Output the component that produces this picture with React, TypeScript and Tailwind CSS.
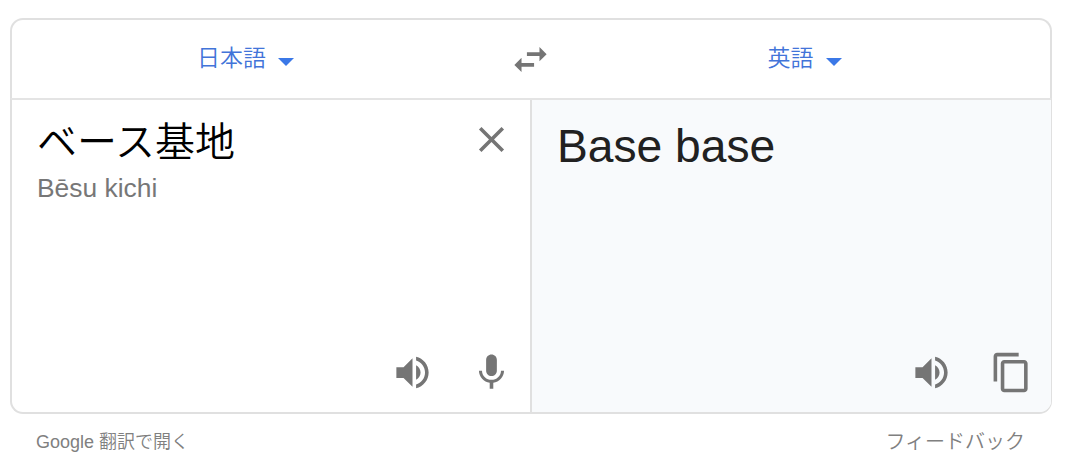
import type { ReactNode } from 'react'

const ICONS = {
  swap: 'M6.99 11L3 15l3.99 4v-3H14v-2H6.99v-3zM21 9l-3.99-4v3H10v2h7.01v3L21 9z',
  close:
    'M19 6.41L17.59 5 12 10.59 6.41 5 5 6.41 10.59 12 5 17.59 6.41 19 12 13.41 17.59 19 19 17.59 13.41 12z',
  volume:
    'M3 9v6h4l5 5V4L7 9H3zm13.5 3c0-1.77-1.02-3.29-2.5-4.03v8.05c1.48-.73 2.5-2.25 2.5-4.02zM14 3.23v2.06c2.89.86 5 3.54 5 6.71s-2.11 5.85-5 6.71v2.06c4.01-.91 7-4.49 7-8.77s-2.99-7.86-7-8.77z',
  mic: 'M12 14c1.66 0 2.99-1.34 2.99-3L15 5c0-1.66-1.34-3-3-3S9 3.34 9 5v6c0 1.66 1.34 3 3 3zm5.3-3c0 3-2.54 5.1-5.3 5.1S6.7 14 6.7 11H5c0 3.41 2.72 6.23 6 6.72V21h2v-3.28c3.28-.48 6-3.3 6-6.72h-1.7z',
  copy: 'M16 1H4c-1.1 0-2 .9-2 2v14h2V3h12V1zm3 4H8c-1.1 0-2 .9-2 2v14c0 1.1.9 2 2 2h11c1.1 0 2-.9 2-2V7c0-1.1-.9-2-2-2zm0 16H8V7h11v14z',
}

function IconButton({ name, label }: { name: keyof typeof ICONS; label: string }) {
  return (
    <button type="button" aria-label={label} className="block shrink-0 self-start text-[#757575]">
      <svg viewBox="0 0 24 24" className="block size-[43px]" fill="currentColor">
        <path d={ICONS[name]} />
      </svg>
    </button>
  )
}

function LanguageButton({ children }: { children: ReactNode }) {
  return (
    <button
      type="button"
      className="flex items-center gap-3 self-start text-[23px] leading-8 font-[350] text-[#4274d9]"
    >
      <span>{children}</span>
      <svg viewBox="0 0 16 8" className="mt-2 h-2 w-4" fill="#3b78e7">
        <path d="M0 0h16L8 8z" />
      </svg>
    </button>
  )
}

export default function App() {
  return (
    <div className="h-[465px] w-[1077px] overflow-hidden bg-white pt-[18px] pl-[10px] font-['Liberation_Sans','Noto_Sans_CJK_JP',sans-serif]">
      <div className="flex h-[396px] w-[1042px] flex-col">
        {/* Language bar */}
        <div className="flex h-20 shrink-0 rounded-t-[13px] border-2 border-b-0 border-[#e0e0e0]">
          <div className="flex w-[497px] justify-center pt-[22px] pr-[30px]">
            <LanguageButton>日本語</LanguageButton>
          </div>
          <div className="pt-[18px]">
            <IconButton name="swap" label="言語を入れ替える" />
          </div>
          <div className="flex flex-1 justify-center pt-[22px] pl-[7px]">
            <LanguageButton>英語</LanguageButton>
          </div>
        </div>

        <div className="flex flex-1 overflow-hidden rounded-b-[13px] border-t-2 border-r border-b-2 border-l-2 border-[#e0e0e0] border-t-[#e4e4e4]">
          {/* Source text */}
          <div className="flex w-[520px] flex-col justify-between border-r-2 border-[#e0e0e0] pr-[17px] pb-[18px] pl-[25px]">
            <div className="flex justify-between pt-[18px]">
              <div>
                <p className="text-[40px] leading-[48px] font-[350] text-black">ベース基地</p>
                <p className="mt-1 text-[26.4px] leading-9 text-[#777]">Bēsu kichi</p>
              </div>
              <IconButton name="close" label="消去" />
            </div>
            <div className="flex justify-end gap-9">
              <IconButton name="volume" label="聞く" />
              <IconButton name="mic" label="音声入力" />
            </div>
          </div>

          {/* Translation */}
          <div className="flex flex-1 flex-col justify-between bg-[#f8fafc] pr-[18px] pb-[18px] pl-[25px]">
            <p className="pt-[18px] text-[46.2px] leading-[56px] text-[#212121]">Base base</p>
            <div className="flex justify-end gap-[37px]">
              <IconButton name="volume" label="聞く" />
              <IconButton name="copy" label="コピー" />
            </div>
          </div>
        </div>
      </div>

      <div className="flex w-[1042px] justify-between pt-3 pr-[27px] pl-[26px] leading-8 text-[#808080]">
        <a className="text-lg leading-8 font-[350]">Google 翻訳で開く</a>
        <a className="text-xl leading-8 font-[350]">フィードバック</a>
      </div>
    </div>
  )
}
